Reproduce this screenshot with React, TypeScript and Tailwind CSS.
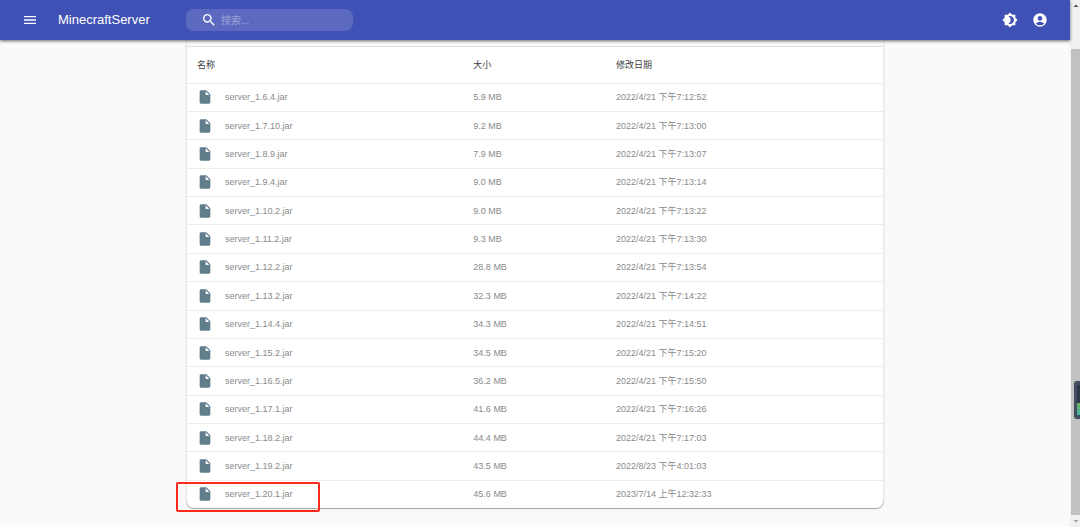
import {
  MdAccountCircle,
  MdArrowDropDown,
  MdArrowDropUp,
  MdBrightness4,
  MdInsertDriveFile,
  MdMenu,
  MdSearch,
} from "react-icons/md";

type ServerFile = {
  name: string;
  size: string;
  date: string;
  marked?: boolean;
};

const files: ServerFile[] = [
  { name: "server_1.6.4.jar", size: "5.9 MB", date: "2022/4/21 下午7:12:52" },
  { name: "server_1.7.10.jar", size: "9.2 MB", date: "2022/4/21 下午7:13:00" },
  { name: "server_1.8.9.jar", size: "7.9 MB", date: "2022/4/21 下午7:13:07" },
  { name: "server_1.9.4.jar", size: "9.0 MB", date: "2022/4/21 下午7:13:14" },
  { name: "server_1.10.2.jar", size: "9.0 MB", date: "2022/4/21 下午7:13:22" },
  { name: "server_1.11.2.jar", size: "9.3 MB", date: "2022/4/21 下午7:13:30" },
  { name: "server_1.12.2.jar", size: "28.8 MB", date: "2022/4/21 下午7:13:54" },
  { name: "server_1.13.2.jar", size: "32.3 MB", date: "2022/4/21 下午7:14:22" },
  { name: "server_1.14.4.jar", size: "34.3 MB", date: "2022/4/21 下午7:14:51" },
  { name: "server_1.15.2.jar", size: "34.5 MB", date: "2022/4/21 下午7:15:20" },
  { name: "server_1.16.5.jar", size: "36.2 MB", date: "2022/4/21 下午7:15:50" },
  { name: "server_1.17.1.jar", size: "41.6 MB", date: "2022/4/21 下午7:16:26" },
  { name: "server_1.18.2.jar", size: "44.4 MB", date: "2022/4/21 下午7:17:03" },
  { name: "server_1.19.2.jar", size: "43.5 MB", date: "2022/8/23 下午4:01:03" },
  {
    name: "server_1.20.1.jar",
    size: "45.6 MB",
    date: "2023/7/14 上午12:32:33",
    marked: true,
  },
];

const Navbar = () => {
  return (
    <header className="z-10 flex h-10 shrink-0 items-center bg-[#3f51b5] px-[22px] text-white shadow-[0_1px_3px_rgba(0,0,0,0.6)]">
      <button type="button" aria-label="菜单" className="cursor-pointer">
        <MdMenu size={16} />
      </button>
      <h1 className="ml-5 w-32 text-[13px] leading-5">MinecraftServer</h1>
      <label className="flex h-[22px] w-[167px] items-center gap-1 rounded-lg bg-white/15 pl-[15px]">
        <MdSearch size={16} className="shrink-0" />
        <input
          type="text"
          aria-label="搜索"
          placeholder="搜索..."
          className="w-full min-w-0 bg-transparent text-[10px] outline-none placeholder:text-white/40"
        />
      </label>
      <div className="ml-auto flex items-center gap-[14px]">
        <button type="button" aria-label="切换主题" className="cursor-pointer">
          <MdBrightness4 size={16} />
        </button>
        <button type="button" aria-label="账户" className="cursor-pointer">
          <MdAccountCircle size={16} />
        </button>
      </div>
    </header>
  );
};

const FileRow = ({ file }: { file: ServerFile }) => {
  return (
    <tr className="border-t border-[#ececec]">
      <td className="relative py-0 pl-[10px]">
        <a href={`#${file.name}`} className="flex items-center gap-3">
          <MdInsertDriveFile size={16} className="text-[#607d8b]" />
          {file.name}
        </a>
        {file.marked && (
          <span className="pointer-events-none absolute top-px -left-[11px] h-[30px] w-36 rounded-xs border-2 border-[#fb2a1d]" />
        )}
      </td>
      <td className="py-0 pl-px">{file.size}</td>
      <td className="py-0 pl-px">{file.date}</td>
    </tr>
  );
};

const FileTable = () => {
  return (
    <div className="flex w-full max-w-[698px] flex-1 flex-col rounded-b-lg border-x border-[#e9e9e9] bg-white shadow-[0_1px_1px_rgba(0,0,0,0.35)]">
      <div className="h-[7px] shrink-0 border-b border-[#e2e2e2] bg-[#fafafa]" />
      <div className="grid flex-1">
        <table className="h-full w-full table-fixed border-collapse text-left text-[9px] leading-3 text-[#8a8a8a]">
          <thead>
            <tr className="h-9 text-[#3c3c3c]">
              <th className="w-[41%] p-0 pl-[10px] font-normal">名称</th>
              <th className="w-[20.5%] py-0 pl-px font-normal">大小</th>
              <th className="py-0 pl-px font-normal">修改日期</th>
            </tr>
          </thead>
          <tbody>
            {files.map((file) => (
              <FileRow key={file.name} file={file} />
            ))}
          </tbody>
        </table>
      </div>
    </div>
  );
};

const ScrollRail = () => {
  return (
    <aside className="flex w-[10px] shrink-0 flex-col items-center bg-[#f1f1f1] pl-px">
      <MdArrowDropUp size={12} className="text-[#505050]" />
      <div className="relative mt-[37px] w-full flex-1 bg-[#c1c1c1]">
        {/* floating monitor widget docked over the scrollbar */}
        <div className="absolute right-0 bottom-24 h-[38px] w-[6px] rounded-l-[3px] bg-[#454d60] py-1 pl-[3px]">
          <div className="h-[18px] bg-[#30364a]" />
          <div className="h-3 bg-linear-to-b from-[#6dae5e] to-[#43b3a0]" />
        </div>
      </div>
      <MdArrowDropDown size={12} className="text-[#a0a0a0]" />
    </aside>
  );
};

const App = () => {
  return (
    <div className="flex h-screen bg-[#fafafa] font-['Liberation_Sans','Noto_Sans_CJK_SC',sans-serif]">
      <div className="flex min-w-0 flex-1 flex-col">
        <Navbar />
        <main className="flex flex-1 flex-col items-center pb-[19px]">
          <FileTable />
        </main>
      </div>
      <ScrollRail />
    </div>
  );
};

export default App;
